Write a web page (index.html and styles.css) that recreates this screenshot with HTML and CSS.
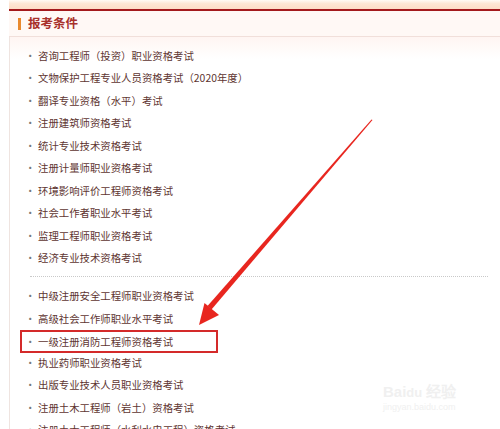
FILE: index.html
```html
<!DOCTYPE html>
<html lang="zh-CN">
<head>
<meta charset="utf-8">
<title>报考条件</title>
<link rel="stylesheet" href="styles.css">
</head>
<body>
<div class="page">
  <div class="topstrip"></div>
  <div class="panel">
    <div class="panel-head">
      <span class="mark"></span>
      <h2 class="title">报考条件</h2>
    </div>
    <div class="panel-body">
      <ul class="list">
        <li>咨询工程师（投资）职业资格考试</li>
        <li>文物保护工程专业人员资格考试（2020年度）</li>
        <li>翻译专业资格（水平）考试</li>
        <li>注册建筑师资格考试</li>
        <li>统计专业技术资格考试</li>
        <li>注册计量师职业资格考试</li>
        <li>环境影响评价工程师资格考试</li>
        <li>社会工作者职业水平考试</li>
        <li>监理工程师职业资格考试</li>
        <li>经济专业技术资格考试</li>
      </ul>
      <div class="sep"></div>
      <ul class="list list2">
        <li>中级注册安全工程师职业资格考试</li>
        <li>高级社会工作师职业水平考试</li>
        <li class="hl">一级注册消防工程师资格考试</li>
        <li>执业药师职业资格考试</li>
        <li>出版专业技术人员职业资格考试</li>
        <li>注册土木工程师（岩土）资格考试</li>
        <li>注册土木工程师（水利水电工程）资格考试</li>
      </ul>
    </div>
  </div>
  <svg class="arrow" width="500" height="429" viewBox="0 0 500 429">
    <polygon points="372.5,120 371.5,119.5 207.5,306 211.5,309.5" fill="#e8261f"/>
    <polygon points="199,325 204.5,303 219,315" fill="#e8261f"/>
  </svg>
  <div class="watermark">
    <div class="wm1">Bai<span class="paw">du</span> 经验</div>
    <div class="wm2">jingyan.baidu.com</div>
  </div>
</div>
</body>
</html>
```
FILE: styles.css
```css
html, body {
  margin: 0;
  padding: 0;
  background: #fff;
}
.page {
  position: relative;
  width: 500px;
  height: 429px;
  overflow: hidden;
  font-family: "Noto Sans CJK SC", "Liberation Sans", sans-serif;
}
.topstrip {
  height: 9px;
  margin-left: 9px;
  background: linear-gradient(to bottom, #fffaf5 0%, #fde6d4 40%, #fddcc6 100%);
}
.panel {
  margin-left: 9px;
  border-top: 2px solid #a3191c;
}
.panel-head {
  height: 26px;
  display: flex;
  align-items: center;
  background: #fff8f5;
  border-bottom: 1px solid #f1dfda;
  box-sizing: border-box;
}
.mark {
  width: 3px;
  height: 12px;
  background: #e9892d;
  margin-left: 9px;
  margin-right: 7px;
}
.title {
  margin: 0;
  font-size: 12.5px;
  font-weight: bold;
  color: #a8302b;
  line-height: 1;
}
.panel-body {
  border-left: 1px solid #efe4e0;
  background: linear-gradient(to bottom, #fff5f2 0px, #ffffff 22px);
  padding-top: 8px;
  height: 400px;
}
.list {
  list-style: none;
  margin: 0;
  padding: 0;
}
.list li {
  height: 22.45px;
  line-height: 22.45px;
  font-size: 10.4px;
  color: #5e3531;
  padding-left: 28px;
  position: relative;
  white-space: nowrap;
}
.list li::before {
  content: "·";
  position: absolute;
  left: 15px;
  color: #777;
}
.list2 li {
  height: 22.35px;
  line-height: 22.35px;
}
.sep {
  margin: 7px 12px 8px 20px;
  border-top: 1px dotted #c9c9c9;
}
.list li.hl {
  width: 198px;
  box-sizing: border-box;
  margin-left: 10px;
  padding-left: 16px;
  border: 2px solid #d42a2a;
  height: 23px;
  line-height: 19px;
  margin-top: -0.5px;
  margin-bottom: -0.5px;
}
.list li.hl::before {
  left: 3px;
}
.arrow {
  position: absolute;
  left: 0;
  top: 0;
}
.watermark {
  position: absolute;
  left: 383px;
  top: 384px;
  color: #f0f0f0;
  font-family: "Liberation Sans", sans-serif;
}
.wm1 {
  font-size: 15px;
  font-weight: bold;
  line-height: 16px;
}
.wm1 .paw {
  font-size: 13px;
}
.wm2 {
  font-size: 9px;
  line-height: 12px;
}
```
